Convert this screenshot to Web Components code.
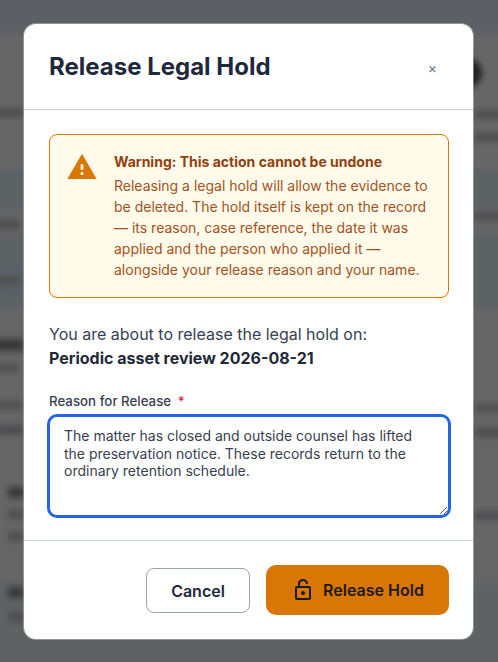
<!DOCTYPE html>
<html><head><meta charset="utf-8"><style>
html,body{margin:0;height:100%;overflow:hidden;font-family:Inter,"Liberation Sans",sans-serif}
</style></head><body>
<page-backdrop></page-backdrop>
<modal-overlay>
<release-dialog>
<span slot="title">Release Legal Hold</span>
<warning-box title-text="Warning: This action cannot be undone">Releasing a legal hold will allow the evidence to be deleted. The hold itself is kept on the record — its reason, case reference, the date it was applied and the person who applied it — alongside your release reason and your name.</warning-box>
<p style="margin:24px 0 0;font-size:16px;line-height:24px;color:#374151">You are about to release the legal hold on:<br><strong style="font-weight:650;color:#1f2937">Periodic asset review 2026-08-21</strong></p>
<reason-field label="Reason for Release" value="The matter has closed and outside counsel has lifted the preservation notice. These records return to the ordinary retention schedule."></reason-field>
<app-button slot="footer" variant="ghost">Cancel</app-button>
<app-button slot="footer" variant="warn" icon>Release Hold</app-button>
</release-dialog>
</modal-overlay>
<script>
function def(name,html,init){customElements.define(name,class extends HTMLElement{constructor(){super();this.attachShadow({mode:'open'}).innerHTML=html;}connectedCallback(){init&&init.call(this,this.shadowRoot)}})}
const bar=(x,y,w,h,c)=>`<div class="b" style="left:${x}px;top:${y}px;width:${w}px;height:${h}px;background:${c||'#c2c2c6'}"></div>`;
def('page-backdrop',`<style>:host{position:absolute;inset:0;display:block;overflow:hidden;background:#fff}
.i{position:absolute;left:0;top:0;width:498px;height:662px;overflow:hidden}
.f{position:absolute;inset:0;filter:blur(3px)}
.b{position:absolute}
</style><div class="i"><div class="f">
${bar(-10,-10,520,44,'#e6f0fa')}${bar(-10,34,520,135,'#ffffff')}${bar(-10,169,520,38,'#e6f2fb')}${bar(-10,207,520,29,'#fafafc')}${bar(-10,236,520,72,'#e6f2fb')}${bar(-10,308,520,274,'#fffdff')}${bar(-10,582,520,90,'#eef4f8')}
${bar(-6,108,30,9)}${bar(-6,220,26,9)}${bar(-6,277,26,8)}
${bar(-6,339,30,12,'#8c8c8c')}${bar(-6,364,24,8)}${bar(-6,401,28,8)}${bar(-6,425,30,10)}
${bar(8,487,16,11,'#8c8c8c')}${bar(8,510,16,9)}${bar(8,532,16,9)}${bar(8,587,16,11,'#8c8c8c')}${bar(8,612,16,10)}
${bar(474,110,30,9)}${bar(474,133,30,9)}${bar(474,212,30,8)}${bar(474,404,30,8)}${bar(474,428,30,9)}${bar(474,511,30,9)}
<div class="b" style="left:452px;top:58px;width:30px;height:30px;border-radius:50%;background:#555"></div>
</div></div>`);
def('modal-overlay',`<style>:host{position:absolute;inset:0;display:flex;align-items:flex-start;justify-content:flex-start;padding:24px 0 0 24px;box-sizing:border-box;background:rgba(0,0,0,.6)}</style><slot></slot>`);
def('release-dialog',`<style>:host{display:block;width:449px;height:615px;box-sizing:border-box;background:#fff;border-radius:12px;box-shadow:0 0 0 1px rgba(203,213,225,.45);overflow:hidden}
header{height:86px;box-sizing:border-box;border-bottom:1px solid #cbd5e1;display:flex;align-items:center;justify-content:space-between;padding:0 36px 0 25px}
h2{margin:0;font-size:24px;font-weight:650;line-height:32px;color:#1e293b}
.c{font-size:14px;color:#64748b;line-height:16px;position:relative;top:1px}
main{height:431px;box-sizing:border-box;padding:24px 24px 0 25px;border-bottom:1px solid #cbd5e1}
footer{display:flex;justify-content:flex-end;gap:16px;padding:24px 24px 0}
</style><header><h2><slot name="title"></slot></h2><span class="c">×</span></header><main><slot></slot></main><footer><slot name="footer"></slot></footer>`);
def('warning-box',`<style>:host{display:flex;gap:16px;box-sizing:border-box;height:164px;padding:16px;background:#fffbeb;border:1px solid #d97706;border-radius:8px}
svg{flex:none;width:32px;height:32px}
b{display:block;font-size:14px;line-height:21px;font-weight:650;color:#92400e;margin-bottom:3px}
p{margin:0;font-size:14px;line-height:21px;color:#a4521e}
</style><svg viewBox="0 0 24 24"><path fill="#d97706" d="M1 21h22L12 2 1 21zm12-3h-2v-2h2v2zm0-4h-2v-4h2v4z"/></svg><div><b></b><p><slot></slot></p></div>`,function(r){r.querySelector('b').textContent=this.getAttribute('title-text')});
def('reason-field',`<style>:host{display:block;margin-top:21px}
label{display:block;font-size:13.3px;font-weight:500;line-height:20px;color:#374151;margin-bottom:5px}
i{font-style:normal;color:#dc2626;margin-left:3px}
textarea{display:block;width:100%;box-sizing:border-box;height:100px;padding:10px 14px;border:1px solid #2563eb;box-shadow:0 0 0 2px #2563eb;border-radius:8px;font:14px/17.5px Inter,sans-serif;color:#374151;outline:none;background:#fff;resize:vertical}
</style><label><span></span> <i>*</i></label><textarea></textarea>`,function(r){r.querySelector('span').textContent=this.getAttribute('label');r.querySelector('textarea').value=this.getAttribute('value')});
def('app-button',`<style>:host{display:inline-flex;align-items:center;justify-content:center;gap:8px;box-sizing:border-box;height:45px;border-radius:8px;font-size:16px;font-weight:600;color:#1e293b}
:host([variant=ghost]){width:104px;border:1px solid #9ca3af;background:#fff;margin-top:3px}
:host([variant=warn]){width:183px;height:50px;background:#d97706;border-radius:10px;color:#1c1917}
svg{width:24px;height:24px;display:none}:host([icon]) svg{display:block}
</style><svg viewBox="0 0 24 24" fill="#1c1917"><path transform="matrix(-1 0 0 1 24 0)" d="M18 8h-1V6c0-2.76-2.24-5-5-5S7 3.24 7 6h2c0-1.66 1.34-3 3-3s3 1.34 3 3v2H6c-1.1 0-2 .9-2 2v10c0 1.1.9 2 2 2h12c1.1 0 2-.9 2-2V10c0-1.1-.9-2-2-2zm0 12H6V10h12v10zm-6-3c1.1 0 2-.9 2-2s-.9-2-2-2-2 .9-2 2 .9 2 2 2z"/></svg><slot></slot>`);
</script>
</body></html>
